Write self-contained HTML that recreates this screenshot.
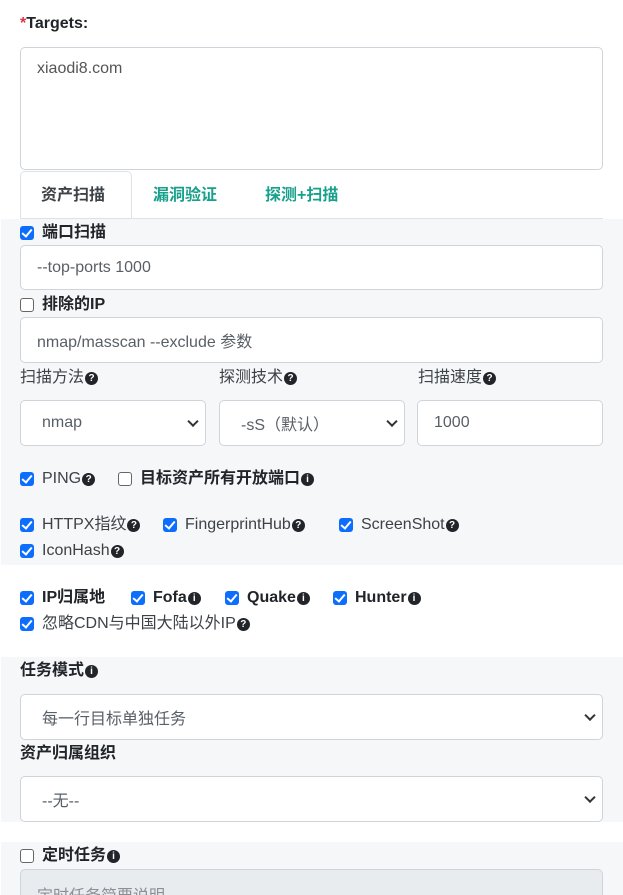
<!DOCTYPE html>
<html><head><meta charset="utf-8"><style>
*{box-sizing:border-box;margin:0;padding:0}
html,body{width:623px;height:895px;overflow:hidden}
body{background:#fff;font-family:"Liberation Sans","Noto Sans CJK SC",sans-serif;font-size:16px;color:#212529;position:relative}
.a{position:absolute;white-space:nowrap;display:flex;align-items:center;height:22px;line-height:22px}
.band{position:absolute;left:1px;right:0;background:#f6f7f9}
.box{position:absolute;left:20px;width:583px;border:1.5px solid #ced4da;border-radius:5px;background:#fff;color:#595f66;padding-left:16px;display:flex;align-items:center}
.cb{display:inline-block;flex:none;width:14px;height:14px;border-radius:3px;margin-right:8px;position:relative}
.on{background:#0d6efd}
.on:after{content:"";position:absolute;left:4px;top:1px;width:4px;height:8px;border:solid #fff;border-width:0 2px 2px 0;transform:rotate(40deg)}
.off{border:1.3px solid #666;background:#fff}
.ic{display:inline-block;flex:none;width:13px;height:13px;border-radius:50%;background:#212529;color:#fff;font-size:10px;font-weight:bold;text-align:center;line-height:13px;margin-left:1px;font-family:"Liberation Sans",sans-serif}
b{font-weight:bold}
.chev{position:absolute;right:8px;top:50%;width:8px;height:8px;border:solid #333;border-width:0 2px 2px 0;transform:translateY(-70%) rotate(45deg)}
.g{color:#3d4247}
</style></head><body>
<div class="a" style="left:20px;top:13px;font-weight:bold"><span style="color:#dc3545">*</span>Targets:</div>
<div class="box" style="top:47px;height:123px;align-items:flex-start;padding-top:12px;color:#555">xiaodi8.com</div>
<div class="a" style="left:20px;top:171px;width:112px;height:48px;border:1px solid #dee2e6;border-bottom:none;border-radius:5px 5px 0 0;background:#fff"></div>
<div class="a" style="left:20px;top:218px;width:583px;height:0;border-top:1px solid #dee2e6"></div>
<div class="a g" style="left:41px;top:185px;font-weight:bold">资产扫描</div>
<div class="a" style="left:153px;top:185px;font-weight:bold;color:#17a08a">漏洞验证</div>
<div class="a" style="left:265px;top:185px;font-weight:bold;color:#17a08a">探测+扫描</div>
<div class="band" style="top:219px;height:346px"></div>
<div class="band" style="top:657px;height:165px"></div>
<div class="band" style="top:842px;height:53px"></div>
<div class="a" style="left:20px;top:222px"><span class="cb on"></span><b>端口扫描</b></div>
<div class="box" style="top:245px;height:45px">--top-ports 1000</div>
<div class="a" style="left:20px;top:294px"><span class="cb off"></span><b>排除的IP</b></div>
<div class="box" style="top:317px;height:46px">nmap/masscan --exclude 参数</div>
<div class="a g" style="left:20px;top:367px">扫描方法<span class="ic">?</span></div>
<div class="a g" style="left:219px;top:367px">探测技术<span class="ic">?</span></div>
<div class="a g" style="left:418px;top:367px">扫描速度<span class="ic">?</span></div>
<div class="box" style="top:400px;width:186px;height:46px;padding-left:21px">nmap<span class="chev"></span></div>
<div class="box" style="left:219px;top:400px;width:186px;height:46px;padding-left:21px">-sS（默认）<span class="chev"></span></div>
<div class="box" style="left:417px;top:400px;width:186px;height:46px;padding-left:16px">1000</div>
<div class="a g" style="left:20px;top:468px"><span class="cb on"></span>PING<span class="ic">?</span></div>
<div class="a" style="left:118px;top:468px"><span class="cb off"></span><b>目标资产所有开放端口</b><span class="ic">i</span></div>
<div class="a g" style="left:20px;top:514px"><span class="cb on"></span>HTTPX指纹<span class="ic">?</span></div>
<div class="a g" style="left:163px;top:514px"><span class="cb on"></span>FingerprintHub<span class="ic">?</span></div>
<div class="a g" style="left:339px;top:514px"><span class="cb on"></span>ScreenShot<span class="ic">?</span></div>
<div class="a g" style="left:20px;top:540px"><span class="cb on"></span>IconHash<span class="ic">?</span></div>
<div class="a" style="left:20px;top:587px"><span class="cb on"></span><b>IP归属地</b></div>
<div class="a" style="left:131px;top:587px"><span class="cb on"></span><b>Fofa</b><span class="ic">i</span></div>
<div class="a" style="left:225px;top:587px"><span class="cb on"></span><b>Quake</b><span class="ic">i</span></div>
<div class="a" style="left:333px;top:587px"><span class="cb on"></span><b>Hunter</b><span class="ic">i</span></div>
<div class="a g" style="left:20px;top:613px"><span class="cb on"></span>忽略CDN与中国大陆以外IP<span class="ic">?</span></div>
<div class="a" style="left:20px;top:660px;font-weight:bold">任务模式<span class="ic">i</span></div>
<div class="box" style="top:694px;height:46px;padding-left:21px">每一行目标单独任务<span class="chev"></span></div>
<div class="a" style="left:20px;top:743px;font-weight:bold">资产归属组织</div>
<div class="box" style="top:776px;height:46px;padding-left:21px">--无--<span class="chev"></span></div>
<div class="a" style="left:20px;top:845px"><span class="cb off"></span><b>定时任务</b><span class="ic">i</span></div>
<div class="box" style="top:869px;height:46px;background:#e9ecef;color:#8a9096;align-items:flex-start;padding-top:12px">定时任务简要说明</div>
</body></html>
